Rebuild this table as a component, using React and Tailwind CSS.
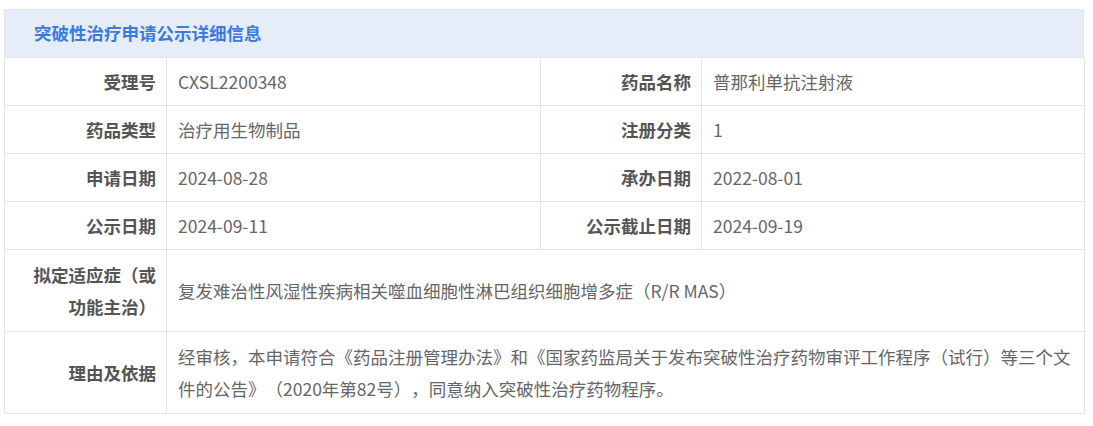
import React from "react";

const rows = [
  [
    { label: "受理号", value: "CXSL2200348" },
    { label: "药品名称", value: "普那利单抗注射液" },
  ],
  [
    { label: "药品类型", value: "治疗用生物制品" },
    { label: "注册分类", value: "1" },
  ],
  [
    { label: "申请日期", value: "2024-08-28" },
    { label: "承办日期", value: "2022-08-01" },
  ],
  [
    { label: "公示日期", value: "2024-09-11" },
    { label: "公示截止日期", value: "2024-09-19" },
  ],
];

const wideRows = [
  {
    label: "拟定适应症（或功能主治）",
    value: "复发难治性风湿性疾病相关噬血细胞性淋巴组织细胞增多症（R/R MAS）",
  },
  {
    label: "理由及依据",
    value:
      "经审核，本申请符合《药品注册管理办法》和《国家药监局关于发布突破性治疗药物审评工作程序（试行）等三个文件的公告》（2020年第82号），同意纳入突破性治疗药物程序。",
  },
];

const labelCls =
  "border border-[#e4e4e4] pl-[28px] pr-[10px] text-right font-bold text-[#555555] align-middle";
const valueCls =
  "border border-[#e4e4e4] pl-[11px] pr-[6px] text-left text-[#666666] align-middle";

export default function App() {
  return (
    <div className="bg-white min-h-[426px] pt-[9px] pl-[4px] font-['Noto_Sans_CJK_SC','Noto_Sans',sans-serif] text-[17.5px] [text-spacing-trim:space-all]">
      <div className="w-[1080px]">
        <div className="h-[49px] bg-[#e6edf9] border border-[#e4e4e4] flex items-center pl-[29px]">
          <h2 className="font-bold text-[#3a7bdc] text-[17.5px]">
            突破性治疗申请公示详细信息
          </h2>
        </div>

        <table className="w-full table-fixed border-collapse -mt-px">
          <colgroup>
            <col className="w-[162px]" />
            <col className="w-[374px]" />
            <col className="w-[161px]" />
            <col className="w-[383px]" />
          </colgroup>
          <tbody>
            {rows.map((row, i) => (
              <tr key={i} className="leading-[31px]">
                {row.map((cell) => (
                  <React.Fragment key={cell.label}>
                    <td className={`${labelCls} py-2`}>{cell.label}</td>
                    <td className={`${valueCls} py-2`}>{cell.value}</td>
                  </React.Fragment>
                ))}
              </tr>
            ))}

            {wideRows.map((row) => (
              <tr key={row.label} className="leading-8">
                <td className={`${labelCls} pt-[9px] pb-2`}>{row.label}</td>
                <td className={`${valueCls} pt-[9px] pb-2`} colSpan={3}>
                  {row.value}
                </td>
              </tr>
            ))}
          </tbody>
        </table>
      </div>
    </div>
  );
}
